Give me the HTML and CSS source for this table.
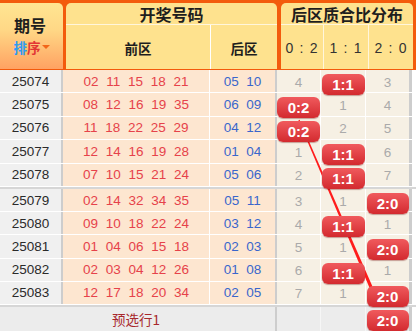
FILE: index.html
```html
<!DOCTYPE html>
<html lang="zh-CN">
<head>
<meta charset="utf-8">
<title>后区质合比分布</title>
<link rel="stylesheet" href="styles.css">
</head>
<body>
<div class="board">
  <div class="head">
    <div class="h-period">
      <div class="h-title">期号</div>
      <div class="sort"><span class="s1">排</span><span class="s2">序</span><span class="caret"></span></div>
    </div>
    <div class="h-block h-draw">
      <div class="h-top">开奖号码</div>
      <div class="h-sub">
        <div class="hs hs-front">前区</div>
        <div class="hs hs-back">后区</div>
      </div>
    </div>
    <div class="h-block h-dist">
      <div class="h-top">后区质合比分布</div>
      <div class="h-sub">
        <div class="hs hd hd1">0 : 2</div>
        <div class="hs hd hd2">1 : 1</div>
        <div class="hs hd hd3">2 : 0</div>
      </div>
    </div>
  </div>

  <div class="group g1">
    <div class="row"><div class="c c-p">25074</div><div class="c c-f"><span>02</span><span>11</span><span>15</span><span>18</span><span>21</span></div><div class="c c-b"><span>05</span><span>10</span></div><div class="c c-d d1">4</div><div class="c c-d d2"><span class="badge">1:1</span></div><div class="c c-d d3">3</div></div>
    <div class="row"><div class="c c-p">25075</div><div class="c c-f"><span>08</span><span>12</span><span>16</span><span>19</span><span>35</span></div><div class="c c-b"><span>06</span><span>09</span></div><div class="c c-d d1"><span class="badge">0:2</span></div><div class="c c-d d2">1</div><div class="c c-d d3">4</div></div>
    <div class="row"><div class="c c-p">25076</div><div class="c c-f"><span>11</span><span>18</span><span>22</span><span>25</span><span>29</span></div><div class="c c-b"><span>04</span><span>12</span></div><div class="c c-d d1"><span class="badge">0:2</span></div><div class="c c-d d2">2</div><div class="c c-d d3">5</div></div>
    <div class="row"><div class="c c-p">25077</div><div class="c c-f"><span>12</span><span>14</span><span>16</span><span>19</span><span>28</span></div><div class="c c-b"><span>01</span><span>04</span></div><div class="c c-d d1">1</div><div class="c c-d d2"><span class="badge">1:1</span></div><div class="c c-d d3">6</div></div>
    <div class="row"><div class="c c-p">25078</div><div class="c c-f"><span>07</span><span>10</span><span>15</span><span>21</span><span>24</span></div><div class="c c-b"><span>05</span><span>06</span></div><div class="c c-d d1">2</div><div class="c c-d d2"><span class="badge">1:1</span></div><div class="c c-d d3">7</div></div>
  </div>
  <div class="sep"></div>
  <div class="group g2">
    <div class="row"><div class="c c-p">25079</div><div class="c c-f"><span>02</span><span>14</span><span>32</span><span>34</span><span>35</span></div><div class="c c-b"><span>05</span><span>11</span></div><div class="c c-d d1">3</div><div class="c c-d d2">1</div><div class="c c-d d3"><span class="badge">2:0</span></div></div>
    <div class="row"><div class="c c-p">25080</div><div class="c c-f"><span>09</span><span>10</span><span>18</span><span>22</span><span>24</span></div><div class="c c-b"><span>03</span><span>12</span></div><div class="c c-d d1">4</div><div class="c c-d d2"><span class="badge">1:1</span></div><div class="c c-d d3">1</div></div>
    <div class="row"><div class="c c-p">25081</div><div class="c c-f"><span>01</span><span>04</span><span>06</span><span>15</span><span>18</span></div><div class="c c-b"><span>02</span><span>03</span></div><div class="c c-d d1">5</div><div class="c c-d d2">1</div><div class="c c-d d3"><span class="badge">2:0</span></div></div>
    <div class="row"><div class="c c-p">25082</div><div class="c c-f"><span>02</span><span>03</span><span>04</span><span>12</span><span>26</span></div><div class="c c-b"><span>01</span><span>08</span></div><div class="c c-d d1">6</div><div class="c c-d d2"><span class="badge">1:1</span></div><div class="c c-d d3">1</div></div>
    <div class="row"><div class="c c-p">25083</div><div class="c c-f"><span>12</span><span>17</span><span>18</span><span>20</span><span>34</span></div><div class="c c-b"><span>02</span><span>05</span></div><div class="c c-d d1">7</div><div class="c c-d d2">1</div><div class="c c-d d3"><span class="badge">2:0</span></div></div>
  </div>
  <div class="sep"></div>
  <div class="row foot"><div class="c c-p"></div><div class="c c-f">预选行1</div><div class="c c-b"></div><div class="c c-d d1"></div><div class="c c-d d2"></div><div class="c c-d d3"><span class="badge">2:0</span></div></div>

  <svg class="arrow" width="416" height="331" viewBox="0 0 416 331" aria-hidden="true">
    <polygon points="298.4,120.3 299.6,119.7 374.1,290.3 371.1,291.5" fill="#ff1c1c"/>
    <polygon points="377.5,302 367.6,292.4 377.8,288" fill="#ff1c1c"/>
  </svg>
</div>
</body>
</html>
```

FILE: styles.css
```css
* { box-sizing: border-box; }
body {
  margin: 0;
  font-family: "Liberation Sans", Arial, "Noto Sans CJK SC", sans-serif;
  background: #fff;
}
.board {
  position: relative;
  width: 416px;
  height: 331px;
  overflow: hidden;
}

/* ---------- header ---------- */
.head {
  display: flex;
  height: 70px;
  padding: 3px 3px 1px 0;
  background: #f35b0c;
}
.h-period {
  width: 63px;
  border-top-right-radius: 5px;
  background: linear-gradient(#ffe592 0%, #ffd886 40%, #ffa262 100%);
  display: flex;
  flex-direction: column;
  align-items: center;
  padding-top: 12px;
  font-family: "Noto Sans CJK SC", sans-serif;
  font-weight: bold;
}
.h-title {
  font-size: 16px;
  line-height: 20px;
  color: #1e1e1e;
  margin-left: -3px;
}
.sort {
  margin-top: 2.5px;
  font-size: 13.5px;
  line-height: 18px;
  display: flex;
  align-items: center;
}
.s1 { color: #2e9bf2; }
.s2 { color: #e23535; }
.caret {
  width: 0;
  height: 0;
  margin-left: 1px;
  border-left: 4px solid transparent;
  border-right: 4px solid transparent;
  border-top: 4px solid #f2661a;
}
.h-block {
  background: #fee28e;
  border-radius: 5px 5px 0 0;
  display: flex;
  flex-direction: column;
}
.h-draw { width: 211px; margin-left: 3px; }
.h-dist { width: 132px; margin-left: 4px; }
.h-top {
  height: 22px;
  border-bottom: 1px solid #fff6dc;
  display: flex;
  align-items: center;
  justify-content: center;
  font-family: "Noto Sans CJK SC", sans-serif;
  font-weight: bold;
  font-size: 16px;
  color: #1e1e1e;
}
.h-sub {
  flex: 1;
  display: flex;
}
.hs {
  display: flex;
  align-items: center;
  justify-content: center;
  padding-top: 2px;
  color: #1e1e1e;
}
.hs-front, .hs-back {
  font-family: "Noto Sans CJK SC", sans-serif;
  font-weight: bold;
  font-size: 13.5px;
}
.hs-front { width: 145px; border-right: 1px solid #fff; }
.hs-back { flex: 1; }
.hd {
  font-size: 14px;
  letter-spacing: 1.2px;
  color: #333;
}
.hd1 { width: 43px; border-right: 1px solid #fff6dc; }
.hd2 { width: 45px; border-right: 1px solid #fff6dc; }
.hd3 { flex: 1; }

/* ---------- body rows ---------- */
.row {
  display: flex;
  height: 23.4px;
  border-bottom: 1px solid #fff;
}
.g2 .row { height: 23.2px; }
.c {
  display: flex;
  align-items: center;
  justify-content: center;
  height: 100%;
  font-size: 13.5px;
}
.c-p {
  width: 63px;
  border-right: 2px solid #cdcdcd;
  background: #f0f0f0;
  color: #2a2a2a;
}
.c-f {
  width: 147px;
  border-right: 1px solid #fff;
  background: #fde6d0;
  color: #e6424a;
  gap: 7.7px;
}
.c-b {
  width: 67px;
  border-right: 2px solid #cdcdcd;
  background: #fde6d0;
  color: #3a66cc;
  gap: 7.7px;
}
.c-d {
  background: #f6f0e4;
  color: #aaaaaa;
  padding-top: 2px;
}
.d1 { width: 44px; border-right: 1px solid #fff; }
.d2 { width: 45px; border-right: 1px solid #fff; }
.d3 { width: 46px; border-right: 3px solid #cdcdcd; }

.badge {
  position: relative;
  z-index: 1;
  align-self: flex-start;
  margin-top: 2px;
  width: 43px;
  height: 21px;
  border-radius: 6px;
  background: linear-gradient(#f05a5d, #d32a2f);
  box-shadow: 0 1px 1px rgba(110, 0, 0, 0.35);
  color: #fff;
  font-weight: bold;
  font-size: 15px;
  display: flex;
  align-items: center;
  justify-content: center;
}
.d3 .badge { width: 42px; }

.sep {
  height: 2px;
  background: #d6d6d6;
}

/* ---------- footer ---------- */
.row.foot {
  height: 24px;
  border-bottom: 0;
}
.foot .c { background: #ececec; }
.foot .c-p { border-right-color: #ececec; }
.foot .c-f {
  border-right-color: #ececec;
  color: #a8282c;
  font-family: "Noto Sans CJK SC", sans-serif;
  font-size: 13.5px;
}
.foot .d1, .foot .d2 { border-right-color: #f6f6f6; }
.foot .badge { margin-top: 1px; }

/* ---------- overlay arrow ---------- */
.arrow {
  position: absolute;
  left: 0;
  top: 0;
  pointer-events: none;
}
```
